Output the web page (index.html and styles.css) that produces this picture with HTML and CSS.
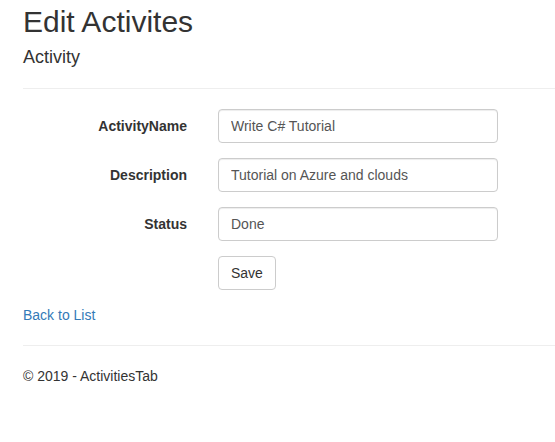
FILE: index.html
```html
<!DOCTYPE html>
<html>
<head>
<meta charset="utf-8">
<title>Edit Activites</title>
<link rel="stylesheet" href="styles.css">
</head>
<body>
<div class="page">
  <h2 class="title">Edit Activites</h2>
  <h4 class="subtitle">Activity</h4>
  <hr class="rule">
  <form class="form">
    <div class="form-group">
      <label class="control-label">ActivityName</label>
      <input class="form-control" type="text" value="Write C# Tutorial">
    </div>
    <div class="form-group">
      <label class="control-label">Description</label>
      <input class="form-control" type="text" value="Tutorial on Azure and clouds">
    </div>
    <div class="form-group">
      <label class="control-label">Status</label>
      <input class="form-control" type="text" value="Done">
    </div>
    <div class="form-group">
      <span class="control-label"></span>
      <button class="btn" type="button">Save</button>
    </div>
  </form>
  <div class="back"><a href="#" class="link">Back to List</a></div>
  <hr class="rule">
  <footer class="footer">
    <p class="copy">&copy; 2019 - ActivitiesTab</p>
  </footer>
</div>
</body>
</html>
```
FILE: styles.css
```css
html, body {
  margin: 0;
  padding: 0;
  background: #fff;
}
body {
  font-family: "Liberation Sans", Arial, Helvetica, sans-serif;
  font-size: 14px;
  line-height: 20px;
  color: #333;
}
.page {
  padding: 5px 0 0 23px;
}
.title {
  font-size: 30px;
  font-weight: 500;
  line-height: 33px;
  margin: 0 0 10px;
  color: #333;
}
.subtitle {
  font-size: 18px;
  font-weight: 500;
  line-height: 19.8px;
  margin: 10px 0 10px;
  color: #333;
}
.rule {
  border: 0;
  border-top: 1px solid #eee;
  margin: 20px 0;
  height: 0;
}
.form {
  margin: 0;
}
.form-group {
  display: flex;
  align-items: flex-start;
  margin-bottom: 15px;
}
.control-label {
  width: 164px;
  flex: none;
  text-align: right;
  font-weight: 700;
  padding-top: 7px;
  margin-right: 31px;
  line-height: 20px;
}
.form-control {
  box-sizing: border-box;
  width: 280px;
  height: 34px;
  padding: 6px 12px;
  font-family: inherit;
  font-size: 14px;
  line-height: 20px;
  color: #555;
  background: #fff;
  border: 1px solid #ccc;
  border-radius: 4px;
  box-shadow: inset 0 1px 1px rgba(0,0,0,.075);
  margin: 0;
}
.btn {
  box-sizing: border-box;
  height: 34px;
  padding: 6px 12px;
  font-family: inherit;
  font-size: 14px;
  line-height: 20px;
  color: #333;
  background: #fff;
  border: 1px solid #ccc;
  border-radius: 4px;
  margin: 0;
}
.back {
  line-height: 20px;
}
.link {
  color: #337ab7;
  text-decoration: none;
}
.footer {
  margin: 0;
}
.copy {
  margin: 0 0 10px;
}
```
